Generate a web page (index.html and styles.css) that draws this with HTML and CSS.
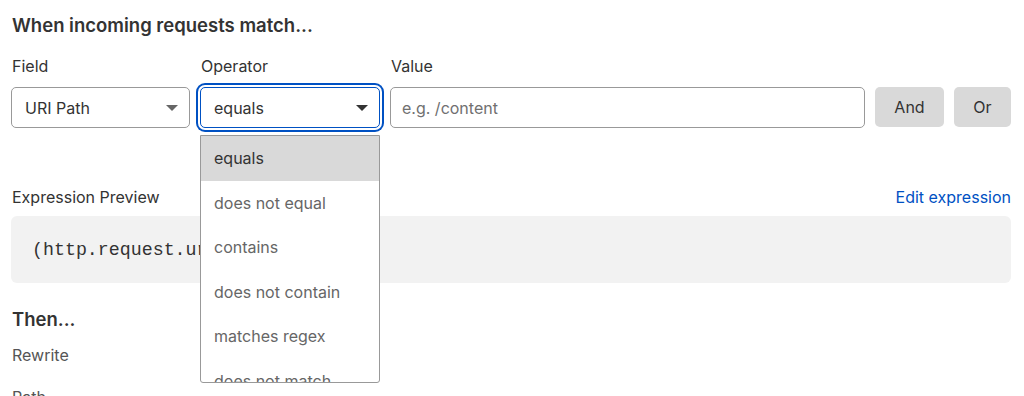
FILE: index.html
```html
<!DOCTYPE html>
<html lang="en">

<head>
    <meta charset="UTF-8">
    <title>Rewrite Rule</title>
    <link rel="stylesheet" href="styles.css">
</head>

<body>

    <div class="container">
        <h2 class="section-title">When incoming requests match...</h2>

        <!-- Filter row -->
        <div class="filter-row">
            <div class="field-col field-narrow">
                <label>Field</label>
                <div class="select">
                    <span>URI Path</span>
                    <span class="caret"></span>
                </div>
            </div>

            <div class="field-col field-narrow operator-col">
                <label>Operator</label>
                <div class="select select-focus">
                    <span>equals</span>
                    <span class="caret caret-dark"></span>
                </div>

                <!-- Open dropdown -->
                <ul class="dropdown">
                    <li class="active">equals</li>
                    <li>does not equal</li>
                    <li>contains</li>
                    <li>does not contain</li>
                    <li>matches regex</li>
                    <li>does not match</li>
                </ul>
            </div>

            <div class="field-col field-wide">
                <label>Value</label>
                <div class="input placeholder">e.g. /content</div>
            </div>

            <button class="btn btn-and">And</button>
            <button class="btn btn-or">Or</button>
        </div>

        <!-- Expression preview -->
        <div class="preview-head">
            <span>Expression Preview</span>
            <a href="#" class="link">Edit expression</a>
        </div>
        <div class="preview-box">
            <code>(http.request.uri.path eq "")</code>
        </div>

        <h2 class="section-title then-title">Then...</h2>
        <div class="sub-label">Rewrite</div>
        <div class="sub-label path-label">Path</div>
    </div>

</body>

</html>
```

FILE: styles.css
```css
/* General Styles */
* {
    margin: 0;
    padding: 0;
    box-sizing: border-box;
}

body {
    font-family: 'Inter', 'Noto Sans', sans-serif;
    background-color: #fff;
    color: #333;
    overflow: hidden;
}

.container {
    padding: 0 13px 0 11px;
}

.section-title {
    font-size: 18.5px;
    font-weight: 600;
    line-height: 24px;
    color: #333;
    padding-left: 1px;
    margin-top: 13px;
}

/* Filter row */
.filter-row {
    display: flex;
    align-items: flex-end;
    gap: 10px;
    margin-top: 19px;
}

.field-col {
    display: flex;
    flex-direction: column;
}

.field-col label {
    font-size: 16px;
    line-height: 20px;
    color: #333;
    padding-left: 1px;
    margin-bottom: 11px;
}

.field-narrow {
    width: 179px;
}

.operator-col {
    position: relative;
    width: 180px;
}

.field-wide {
    flex: 1;
}

.select,
.input {
    height: 41px;
    border: 1px solid #999;
    border-radius: 5px;
    display: flex;
    align-items: center;
    justify-content: space-between;
    padding: 0 11px 0 13px;
    font-size: 16px;
    color: #333;
    background: #fff;
}

.select-focus {
    border-color: #0051c3;
    box-shadow: 0 0 0 2px #fff, 0 0 0 4px #0051c3;
}

.placeholder {
    color: #707070;
    padding-left: 11px;
}

.caret {
    width: 0;
    height: 0;
    border-left: 6px solid transparent;
    border-right: 6px solid transparent;
    border-top: 6px solid #666;
}

.caret-dark {
    border-top-color: #333;
}

/* Dropdown list */
.dropdown {
    position: absolute;
    top: 79px;
    left: 0;
    width: 180px;
    height: 248px;
    overflow: hidden;
    list-style: none;
    background: #fff;
    border: 1px solid #999;
    border-radius: 0 0 3px 3px;
    z-index: 10;
}

.dropdown li {
    height: 44.5px;
    line-height: 44.5px;
    padding-left: 13px;
    font-size: 16px;
    color: #666;
}

.dropdown li.active {
    background: #d9d9d9;
    color: #333;
}

.btn {
    height: 40px;
    margin-bottom: 1px;
    border: none;
    border-radius: 5px;
    background: #d9d9d9;
    color: #333;
    font-family: inherit;
    font-size: 16px;
    cursor: pointer;
}

.btn-and {
    width: 69px;
}

.btn-or {
    width: 57px;
}

/* Preview */
.preview-head {
    display: flex;
    justify-content: space-between;
    align-items: center;
    margin-top: 59px;
    font-size: 16px;
    line-height: 20px;
    padding-left: 1px;
}

.link {
    color: #0051c3;
    text-decoration: none;
    font-size: 16px;
}

.preview-box {
    margin-top: 9px;
    height: 67px;
    background: #f2f2f2;
    border-radius: 6px;
    display: flex;
    align-items: center;
    padding-left: 21px;
}

.preview-box code {
    font-family: 'Liberation Mono', 'DejaVu Sans Mono', monospace;
    font-size: 18.3px;
    color: #333;
}

.then-title {
    margin-top: 24px;
}

.sub-label {
    font-size: 16px;
    line-height: 20px;
    color: #555;
    padding-left: 1px;
    margin-top: 14px;
}

.path-label {
    margin-top: 22px;
}
```
